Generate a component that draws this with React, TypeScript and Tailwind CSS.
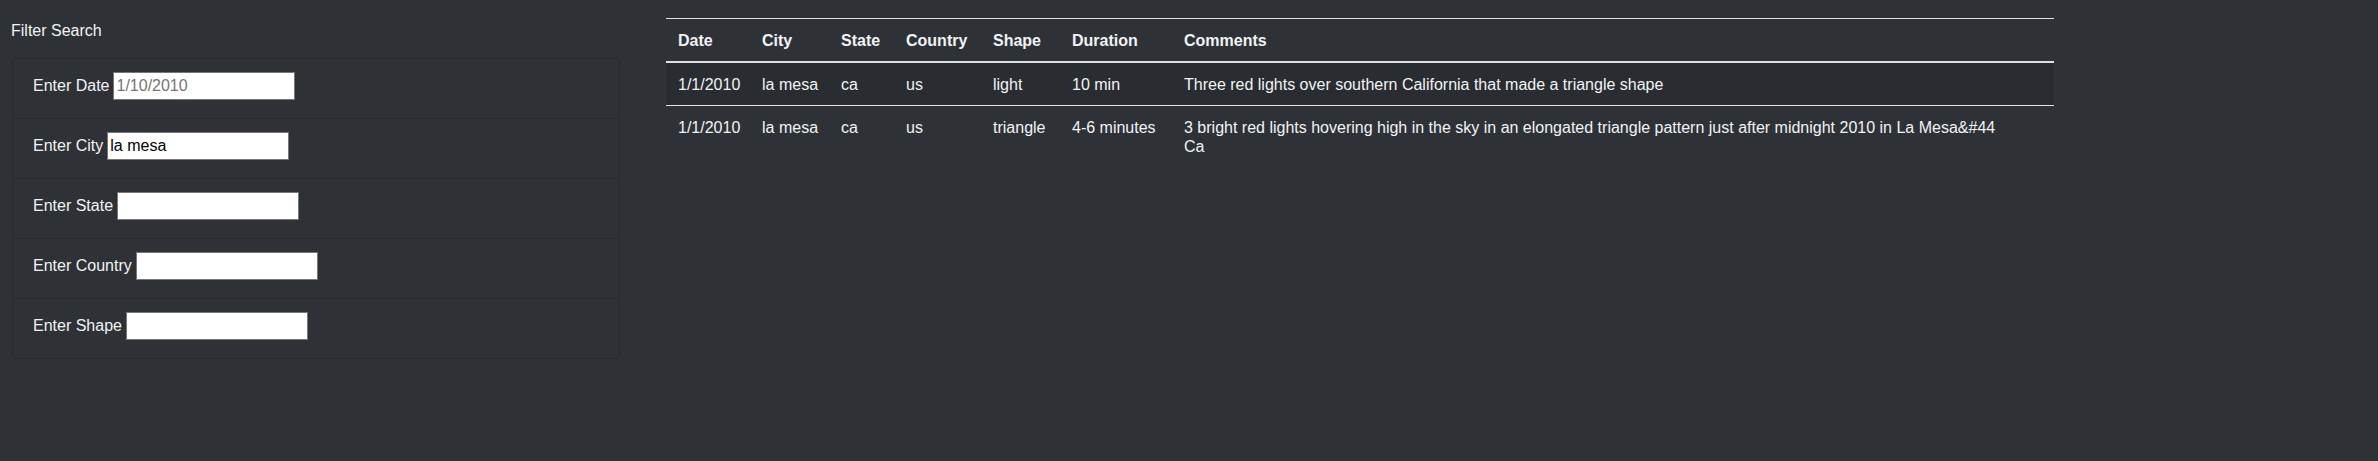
import React from "react";

interface Sighting {
  datetime: string;
  city: string;
  state: string;
  country: string;
  shape: string;
  duration: string;
  comments: React.ReactNode;
}

const FILTERS = [
  { id: "datetime", label: "Enter Date", placeholder: "1/10/2010", value: "" },
  { id: "city", label: "Enter City", placeholder: "", value: "la mesa" },
  { id: "state", label: "Enter State", placeholder: "", value: "" },
  { id: "country", label: "Enter Country", placeholder: "", value: "" },
  { id: "shape", label: "Enter Shape", placeholder: "", value: "" },
];

const COLUMNS = [
  { key: "datetime", label: "Date", width: "w-[84px]" },
  { key: "city", label: "City", width: "w-[79px]" },
  { key: "state", label: "State", width: "w-[65px]" },
  { key: "country", label: "Country", width: "w-[87px]" },
  { key: "shape", label: "Shape", width: "w-[79px]" },
  { key: "duration", label: "Duration", width: "w-[112px]" },
  { key: "comments", label: "Comments", width: "" },
];

const SIGHTINGS: Sighting[] = [
  {
    datetime: "1/1/2010",
    city: "la mesa",
    state: "ca",
    country: "us",
    shape: "light",
    duration: "10 min",
    comments: "Three red lights over southern California that made a triangle shape",
  },
  {
    datetime: "1/1/2010",
    city: "la mesa",
    state: "ca",
    country: "us",
    shape: "triangle",
    duration: "4-6 minutes",
    comments: (
      <>
        3 bright red lights hovering high in the sky in an elongated triangle pattern just after
        midnight 2010 in La Mesa&amp;#44
        <br />
        Ca
      </>
    ),
  },
];

const cell = "px-3 pt-[12px] pb-[11px] align-top whitespace-nowrap";

function FilterPanel() {
  return (
    <div className="w-[608px] ml-[12px] shrink-0">
      <p className="ml-[-1px] pt-[19px] mb-[15px] leading-6 text-[16px] text-[#f1f3f5]">Filter Search</p>
      <ul className="rounded-[4px] border border-[#272a2e]">
        {FILTERS.map((f, i) => (
          <li
            key={f.id}
            className={`flex items-center px-5 pb-[5px] ${
              i > 0 ? "h-[60px] border-t border-[#272a2e]" : "h-[59px]"
            }`}
          >
            <label htmlFor={f.id} className="flex items-center gap-[4px] text-[16px] text-[#f1f3f5]">
              {f.label}
              <input
                id={f.id}
                type="text"
                defaultValue={f.value}
                placeholder={f.placeholder}
                className="w-[182px] h-[28px] bg-white border border-[#767676] px-[2px] text-[16px] text-black placeholder:text-[#757575] outline-none"
              />
            </label>
          </li>
        ))}
      </ul>
    </div>
  );
}

function SightingsTable() {
  return (
    <table className="ml-[46px] mt-[18px] w-[1388px] table-fixed border-collapse text-[16px] leading-[19px] text-[#f1f3f5]">
      <thead>
        <tr className="border-t border-[#dee2e6] border-b-2">
          {COLUMNS.map((c) => (
            <th key={c.key} className={`${c.width} ${cell} text-left font-bold`}>
              {c.label}
            </th>
          ))}
        </tr>
      </thead>
      <tbody>
        {SIGHTINGS.map((s, i) => (
          <tr
            key={i}
            className={`${i % 2 === 0 ? "bg-[#292c30]" : ""} ${
              i > 0 ? "border-t border-[#dee2e6]" : ""
            }`}
          >
            <td className={cell}>{s.datetime}</td>
            <td className={cell}>{s.city}</td>
            <td className={cell}>{s.state}</td>
            <td className={cell}>{s.country}</td>
            <td className={cell}>{s.shape}</td>
            <td className={cell}>{s.duration}</td>
            <td className="px-3 pt-[12px] pb-[11px] align-top">{s.comments}</td>
          </tr>
        ))}
      </tbody>
    </table>
  );
}

export default function App() {
  return (
    <div className="min-h-screen bg-[#2e3236] font-['Liberation_Sans',Arial,sans-serif]">
      <div className="flex items-start">
        <FilterPanel />
        <SightingsTable />
      </div>
    </div>
  );
}
